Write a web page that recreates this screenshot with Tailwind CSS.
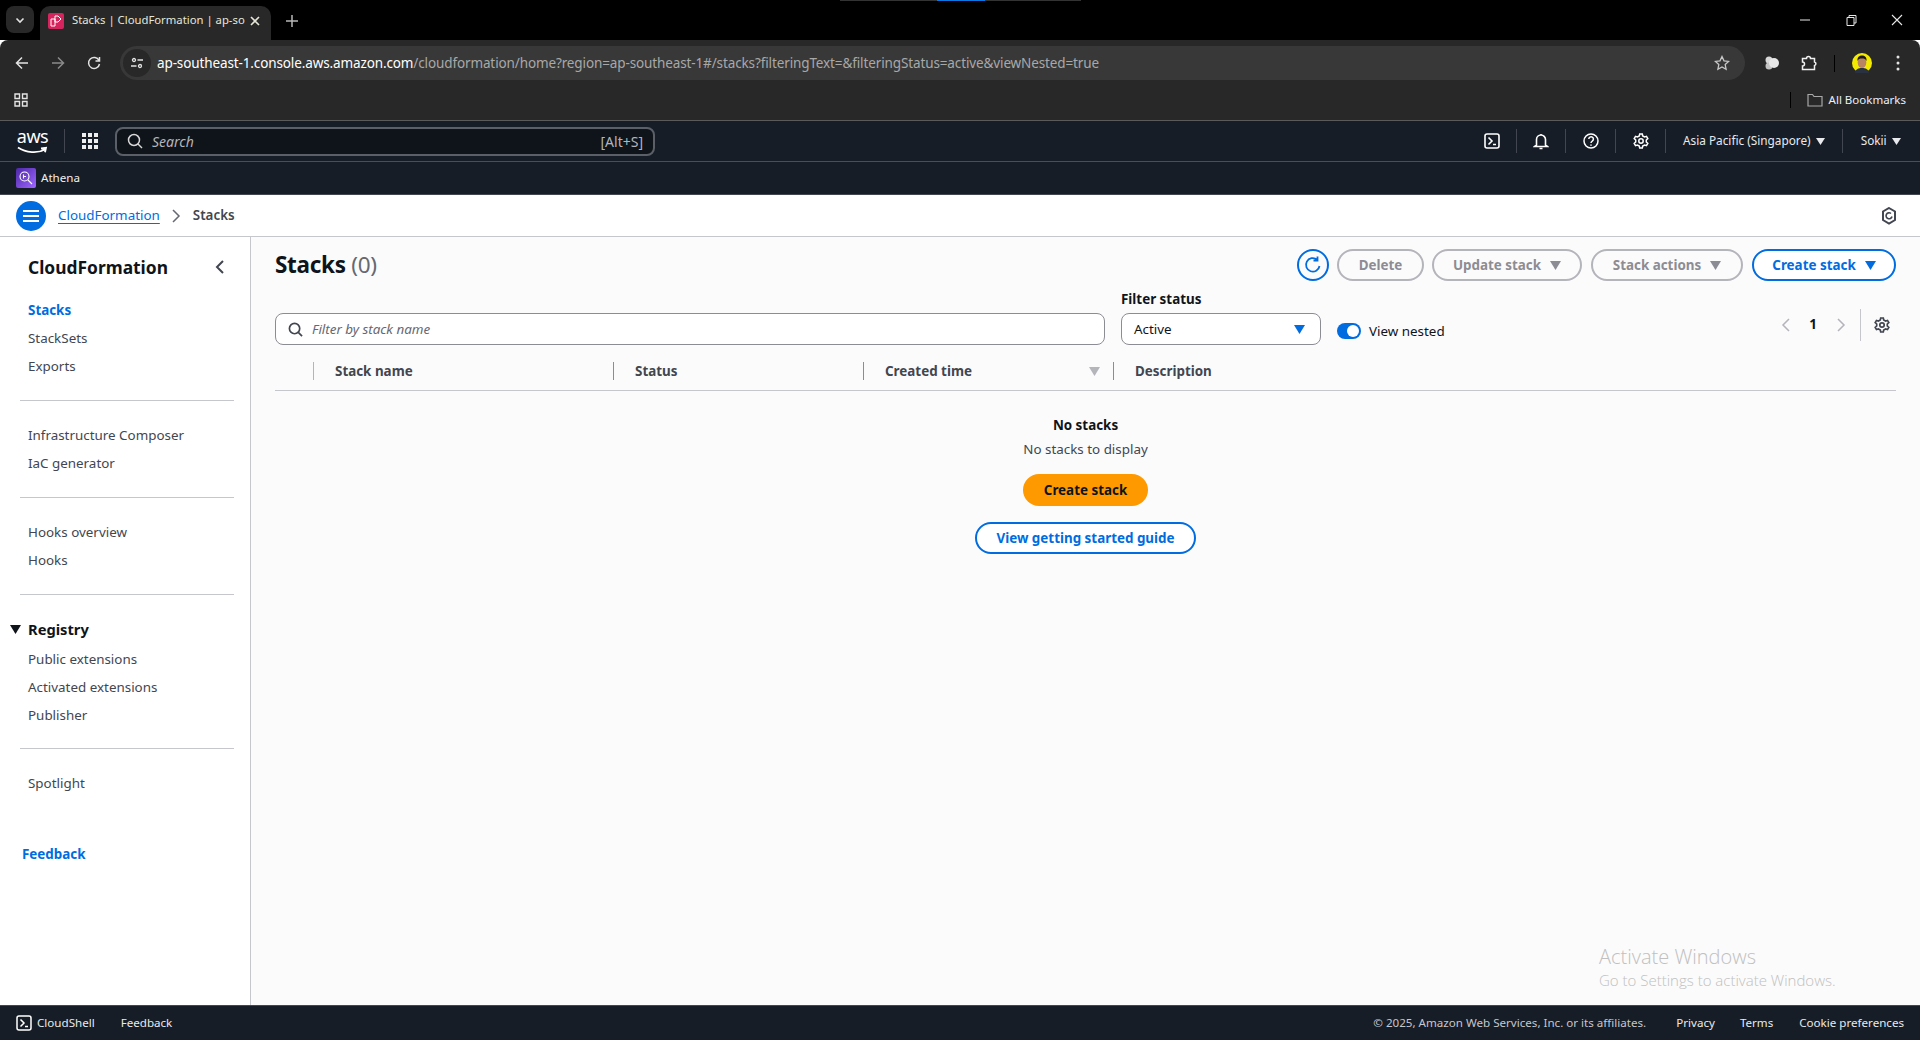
<!DOCTYPE html>
<html lang="en">
  <head>
    <meta charset="UTF-8" />
    <title>Stacks | CloudFormation</title>
    <script src="https://cdn.jsdelivr.net/npm/@tailwindcss/browser@4"></script>
  </head>
  <body class="relative w-[1920px] h-[1040px] overflow-hidden flex flex-col bg-white font-['Noto_Sans',sans-serif] text-[13.4px] text-[#424650]">

    <!-- Browser tab strip -->
    <div class="relative h-10 shrink-0 bg-black flex items-end pl-[6px]">
      <div class="absolute top-0 left-[840px] w-[241px] h-px bg-[#333] flex justify-center"><div class="w-12 h-px bg-[#0a78e0]"></div></div>
      <div class="mb-[7px] w-7 h-[27px] rounded-lg bg-[#282828] flex items-center justify-center">
        <svg width="12" height="12" viewBox="0 0 12 12" fill="none" stroke="#e3e3e3" stroke-width="1.6"><path d="M2.5 4.5 6 8l3.5-3.5"/></svg>
      </div>
      <div class="ml-[6px] w-[231px] h-[34px] pb-[5px] rounded-t-[10px] bg-[#282828] flex items-center pl-2 text-[11.3px] text-[#e6e6d8]">
        <div class="w-4 h-4 rounded-[2px] bg-[#d6245f] flex items-center justify-center">
          <svg width="12" height="12" viewBox="0 0 12 12" fill="none" stroke="#fff" stroke-width="1"><path d="M1 4h4v7H1zM5 1h3l3 3-3 3H5z"/></svg>
        </div>
        <span class="ml-2 w-[170px] whitespace-nowrap">Stacks | CloudFormation | ap-so</span>
        <svg class="ml-[7px]" width="12" height="12" viewBox="0 0 12 12" stroke="#e6e6d8" stroke-width="1.6"><path d="M2 2l8 8M10 2l-8 8"/></svg>
      </div>
      <svg class="ml-[15px] mb-[13px]" width="12" height="12" viewBox="0 0 12 12" stroke="#b8b8b8" stroke-width="1.5"><path d="M6 0v12M0 6h12"/></svg>
      <div class="ml-auto flex items-center h-10">
        <svg width="46" height="12" viewBox="0 0 46 12" stroke="#e8e8e8"><path d="M18 6h10"/></svg>
        <svg width="46" height="12" viewBox="0 0 46 12" fill="none" stroke="#e8e8e8"><path d="M19 3.5h7v8h-7zM21 3.500V1.500h7v7.500h-2"/></svg>
        <svg width="46" height="12" viewBox="0 0 46 12" stroke="#e8e8e8" stroke-width="1.1"><path d="M18 1l10 10M28 1l-10 10"/></svg>
      </div>
    </div>

    <!-- Browser toolbar -->
    <div class="h-10 shrink-0 bg-[#282828] rounded-t-lg flex items-center pt-[6px]">
      <svg class="ml-[15px]" width="14" height="14" viewBox="0 0 14 14" fill="none" stroke="#e3e3e3" stroke-width="1.5"><path d="M13 7H1.500M7 1.500 1.500 7 7 12.500"/></svg>
      <svg class="ml-[22px]" width="14" height="14" viewBox="0 0 14 14" fill="none" stroke="#8a8a8a" stroke-width="1.5"><path d="M1 7h11.500M7 1.500 12.500 7 7 12.500"/></svg>
      <svg class="ml-[22px]" width="14" height="14" viewBox="0 0 14 14" fill="none" stroke="#e3e3e3" stroke-width="1.500"><path d="M12 4.500A5.500 5.500 0 1 0 12.500 8M12.500 1v4h-4"/></svg>
      <div class="ml-[19px] w-[1625px] h-[34px] rounded-full bg-[#383838] flex items-center pl-[3px] text-[13.5px] text-[#a8a8a8]">
        <div class="w-7 h-7 rounded-full bg-[#282828] flex items-center justify-center">
          <svg width="14" height="14" viewBox="0 0 14 14" fill="none" stroke="#e3e3e3" stroke-width="1.300"><circle cx="4" cy="4" r="1.500"/><path d="M7.500 4H13M1 10h5.500"/><circle cx="10" cy="10" r="1.500"/></svg>
        </div>
        <span class="ml-[6px] whitespace-nowrap tracking-[-0.12px]"><span class="text-white">ap-southeast-1.console.aws.amazon.com</span>/cloudformation/home?region=ap-southeast-1#/stacks?filteringText=&amp;filteringStatus=active&amp;viewNested=true</span>
        <svg class="ml-auto mr-[15px]" width="16" height="16" viewBox="0 0 16 16" fill="none" stroke="#c8c8c8" stroke-width="1.300"><path d="M8 1.500l2 4.300 4.600.6-3.400 3.200.9 4.700L8 12l-4.100 2.300.9-4.700L1.400 6.400 6 5.800z"/></svg>
      </div>
      <svg class="ml-[19px]" width="16" height="16" viewBox="0 0 16 16" fill="#d8d8d8"><circle cx="5" cy="5" r="3.500"/><circle cx="5" cy="11" r="3.500" fill="#c4c4c4"/><circle cx="10" cy="8" r="5" fill="#e8e8e8"/></svg>
      <svg class="ml-[21px]" width="17" height="17" viewBox="0 0 17 17" fill="none" stroke="#f0f0f0" stroke-width="1.500"><path d="M1.500 3.500h4a2 2 0 0 1 4 0h4v3.500a1.800 1.800 0 0 1 0 3.500v4h-12v-3.500a2 2 0 0 0 0-4z"/></svg>
      <div class="ml-[16px] w-px h-[17px] bg-black"></div>
      <svg class="ml-[17px]" width="20" height="20" viewBox="0 0 20 20">
        <circle cx="10" cy="10" r="10" fill="#f4ea00"/>
        <path d="M3 20c.5-4 3.500-5 7-5s6.500 1 7 5z" fill="#2a3140"/>
        <ellipse cx="10" cy="9.500" rx="4.300" ry="5.500" fill="#b98461"/>
        <path d="M5.500 8c-.5-4 2-5.500 4.500-5.500S15 4 14.500 8c-1-2-2-2.500-4.500-2.500S6.500 6 5.500 8z" fill="#1f1a18"/>
      </svg>
      <svg class="ml-[24px]" width="4" height="16" viewBox="0 0 4 16" fill="#e3e3e3"><circle cx="2" cy="2" r="1.500"/><circle cx="2" cy="8" r="1.500"/><circle cx="2" cy="14" r="1.500"/></svg>
    </div>

    <!-- Bookmarks bar -->
    <div class="h-[41px] shrink-0 bg-[#282828] flex items-center border-b border-[#5a5a5a] text-[11.5px] text-[#e8f0ff]">
      <svg class="ml-[14px]" width="14" height="14" viewBox="0 0 14 14" fill="none" stroke="#e3e3e3" stroke-width="1.400"><path d="M1 1h4.500v4.500H1zM8.500 1H13v4.500H8.500zM1 8.500h4.500V13H1zM8.500 8.500H13V13H8.500z"/></svg>
      <div class="ml-auto w-px h-4 bg-black mr-[16px]"></div>
      <svg width="16" height="14" viewBox="0 0 16 14" fill="none" stroke="#a8a8a8" stroke-width="1.200"><path d="M1 2.500V13h14V3.500H7L5.500 1.500H1z"/></svg>
      <span class="ml-[6px] mr-[14px]">All Bookmarks</span>
    </div>

    <!-- AWS console nav -->
    <div class="h-[41px] shrink-0 bg-[#161d26] flex items-center border-b border-[#4a4f56] text-[11.8px] text-[#e8eaed]">
      <div class="ml-[17px] w-[31px] relative h-7 flex flex-col items-center">
        <span class="text-[18px] leading-[18px] text-white tracking-[-0.5px]">aws</span>
        <svg class="absolute bottom-0 left-0" width="32" height="9" viewBox="0 0 32 9" fill="none" stroke="#fff" stroke-width="1.800"><path d="M1 1.500C9 7 21 7.500 28 3.500M24 2.500l5-.7-1 4.500"/></svg>
      </div>
      <div class="ml-[16px] w-px h-6 bg-[#424650]"></div>
      <svg class="ml-[17px]" width="16" height="16" viewBox="0 0 16 16" fill="#eeeeee"><path d="M0 0h4v4H0zM6 0h4v4H6zM12 0h4v4h-4zM0 6h4v4H0zM6 6h4v4H6zM12 6h4v4h-4zM0 12h4v4H0zM6 12h4v4H6zM12 12h4v4h-4z"/></svg>
      <div class="ml-[17px] w-[540px] h-[29px] rounded-lg border-2 border-[#5b6068] bg-[#0f141a] flex items-center px-[10px] text-[14px] text-[#b4b4bb]">
        <svg width="16" height="16" viewBox="0 0 16 16" fill="none" stroke="#d8d8d8" stroke-width="1.500"><circle cx="7" cy="7" r="5.500"/><path d="M11 11l4 4"/></svg>
        <span class="ml-[9px] italic">Search</span>
        <span class="ml-auto">[Alt+S]</span>
      </div>
      <svg class="ml-[829px]" width="16" height="16" viewBox="0 0 16 16" fill="none" stroke="#fff" stroke-width="1.600"><rect x="1" y="1" width="14" height="14" rx="2"/><path d="M4.500 4.500 8 8l-3.500 3.500M9 11.500h3"/></svg>
      <div class="ml-[16px] w-px h-6 bg-[#424650]"></div>
      <svg class="ml-[16px]" width="16" height="17" viewBox="0 0 16 17" fill="none" stroke="#fff" stroke-width="1.600"><path d="M3.500 12V6.500a4.500 4.500 0 0 1 9 0V12l2 1.500H1.500zM6.500 15.500h3M8 1v1"/></svg>
      <div class="ml-[16px] w-px h-6 bg-[#424650]"></div>
      <svg class="ml-[17px]" width="16" height="16" viewBox="0 0 16 16" fill="none" stroke="#fff" stroke-width="1.500"><circle cx="8" cy="8" r="7"/><path d="M5.800 6a2.300 2.300 0 1 1 3.500 2C8.400 8.600 8 9 8 10M8 11.500v1.300"/></svg>
      <div class="ml-[16px] w-px h-6 bg-[#424650]"></div>
      <svg class="ml-[17px]" width="16" height="16" viewBox="0 0 16 16" fill="none" stroke="#fff" stroke-width="1.500"><circle cx="8" cy="8" r="2.200"/><path d="M6.700 1h2.600l.4 2 1.900 1 1.900-.6 1.300 2.200-1.500 1.400v2l1.500 1.400-1.300 2.200-1.900-.6-1.900 1-.4 2H6.700l-.4-2-1.900-1-1.900.6L1.200 10.400l1.500-1.400V7L1.200 5.600l1.300-2.200 1.900.6 1.900-1z"/></svg>
      <div class="ml-[16px] w-px h-6 bg-[#424650]"></div>
      <span class="ml-[17px] whitespace-nowrap">Asia Pacific (Singapore)</span>
      <svg class="ml-[5px]" width="9" height="7" viewBox="0 0 9 7" fill="#e8eaed"><path d="M0 0h9L4.500 7z"/></svg>
      <div class="ml-[17px] w-px h-6 bg-[#424650]"></div>
      <span class="ml-[18px]">Sokii</span>
      <svg class="ml-[5px]" width="9" height="7" viewBox="0 0 9 7" fill="#e8eaed"><path d="M0 0h9L4.500 7z"/></svg>
    </div>

    <!-- Service shortcuts -->
    <div class="h-[33px] shrink-0 bg-[#161d26] flex items-center border-b border-[#424650] text-[11.6px] text-[#f0f0f0]">
      <div class="ml-4 w-5 h-5 rounded-[2px] bg-gradient-to-br from-[#4d27a8] to-[#a166ff] flex items-center justify-center">
        <svg width="14" height="14" viewBox="0 0 14 14" fill="none" stroke="#fff" stroke-width="1.100"><circle cx="5.500" cy="5.500" r="4.500"/><path d="M9 9l4 4M4.500 3.500v4M4 5.500h3"/></svg>
      </div>
      <span class="ml-[5px]">Athena</span>
    </div>

    <!-- Breadcrumb header -->
    <div class="h-[42px] shrink-0 bg-white flex items-center border-b border-[#c6c6cd]">
      <div class="ml-4 w-[30px] h-[30px] rounded-full bg-[#006ce0] flex items-center justify-center">
        <svg width="16" height="14" viewBox="0 0 16 14" stroke="#fff" stroke-width="2"><path d="M0 2h16M0 7h16M0 12h16"/></svg>
      </div>
      <a class="ml-3 text-[#006ce0] underline underline-offset-[3px]">CloudFormation</a>
      <svg class="ml-[12px]" width="9" height="14" viewBox="0 0 9 14" fill="none" stroke="#656871" stroke-width="1.500"><path d="M1 1l6 6-6 6"/></svg>
      <span class="ml-[12px] font-semibold text-[#424650]">Stacks</span>
      <svg class="ml-auto mr-[23px]" width="16" height="18" viewBox="0 0 16 18" fill="none" stroke="#424650" stroke-width="2"><path d="M8 1l6 3.500v8.500l-6 3.500L2 13V4.500z"/><path d="M11 9.500a3 3 0 1 1-1-3" stroke-width="1.600"/></svg>
    </div>

    <!-- Main -->
    <div class="flex-1 min-h-0 flex">
      <!-- Side navigation -->
      <nav class="w-[251px] shrink-0 bg-white border-r border-[#c6c6cd] flex flex-col">
        <div class="ml-[28px] mr-[26px] mt-[16px] h-7 flex items-center justify-between">
          <span class="text-[17.4px] font-bold text-[#0f141a]">CloudFormation</span>
          <svg width="9" height="14" viewBox="0 0 9 14" fill="none" stroke="#424650" stroke-width="2"><path d="M8 1 2 7l6 6"/></svg>
        </div>
        <ul class="mt-[17px] ml-[28px] flex flex-col gap-[4px] [&>li]:h-6 [&>li]:leading-6">
          <li class="font-bold text-[#006ce0]">Stacks</li>
          <li>StackSets</li>
          <li>Exports</li>
        </ul>
        <div class="ml-5 mr-4 mt-[22px] border-t border-[#c6c6cd]"></div>
        <ul class="mt-[22px] ml-[28px] flex flex-col gap-[4px] [&>li]:h-6 [&>li]:leading-6">
          <li>Infrastructure Composer</li>
          <li>IaC generator</li>
        </ul>
        <div class="ml-5 mr-4 mt-[22px] border-t border-[#c6c6cd]"></div>
        <ul class="mt-[22px] ml-[28px] flex flex-col gap-[4px] [&>li]:h-6 [&>li]:leading-6">
          <li>Hooks overview</li>
          <li>Hooks</li>
        </ul>
        <div class="ml-5 mr-4 mt-[22px] border-t border-[#c6c6cd]"></div>
        <div class="mt-[22px] h-6 flex items-center pl-[10px]">
          <svg width="11" height="9" viewBox="0 0 11 9" fill="#0f141a"><path d="M0 0h11L5.500 9z"/></svg>
          <span class="ml-[7px] text-[14.7px] font-bold text-[#0f141a]">Registry</span>
        </div>
        <ul class="mt-[6px] ml-[28px] flex flex-col gap-[4px] [&>li]:h-6 [&>li]:leading-6">
          <li>Public extensions</li>
          <li>Activated extensions</li>
          <li>Publisher</li>
        </ul>
        <div class="ml-5 mr-4 mt-[21px] border-t border-[#c6c6cd]"></div>
        <div class="mt-[22px] ml-[28px] h-6 leading-6">Spotlight</div>
        <div class="mt-[47px] ml-[22px] h-6 leading-6 font-bold text-[#006ce0]">Feedback</div>
      </nav>

      <!-- Content -->
      <main class="flex-1 min-w-0 bg-[#fbfbfb] pl-[24px] pr-[24px] flex flex-col">
        <div class="mt-[12px] h-8 flex items-center">
          <h1 class="text-[22.500px] font-bold text-[#0f141a] tracking-[-0.3px]">Stacks <span class="font-normal text-[#656871]">(0)</span></h1>
          <div class="ml-auto w-8 h-8 rounded-full border-2 border-[#006ce0] flex items-center justify-center">
            <svg width="18" height="18" viewBox="0 0 18 18" fill="none" stroke="#006ce0" stroke-width="1.800"><path d="M15.500 10A6.800 6.800 0 1 1 13 3.500M13.500 .5v4h-4"/></svg>
          </div>
          <div class="ml-2 w-[87px] h-8 rounded-full border-2 border-[#b4b4bb] flex items-center justify-center font-bold text-[#8c8c94]">Delete</div>
          <div class="ml-2 w-[150px] h-8 rounded-full border-2 border-[#b4b4bb] flex items-center justify-center gap-[9px] font-bold text-[#8c8c94]">Update stack
            <svg width="11" height="9" viewBox="0 0 11 9" fill="#8c8c94"><path d="M0 0h11L5.500 9z"/></svg>
          </div>
          <div class="ml-[9px] w-[152px] h-8 rounded-full border-2 border-[#b4b4bb] flex items-center justify-center gap-[9px] font-bold text-[#8c8c94]">Stack actions
            <svg width="11" height="9" viewBox="0 0 11 9" fill="#8c8c94"><path d="M0 0h11L5.500 9z"/></svg>
          </div>
          <div class="ml-[9px] w-[144px] h-8 rounded-full border-2 border-[#006ce0] bg-white flex items-center justify-center gap-[9px] font-bold text-[#006ce0]">Create stack
            <svg width="11" height="9" viewBox="0 0 11 9" fill="#006ce0"><path d="M0 0h11L5.500 9z"/></svg>
          </div>
        </div>

        <!-- Filters -->
        <div class="mt-[18px] flex items-end h-[46px]">
          <div class="w-[830px] h-8 rounded-lg border border-[#8c8c94] bg-white flex items-center pl-3">
            <svg width="15" height="15" viewBox="0 0 16 16" fill="none" stroke="#424650" stroke-width="1.800"><circle cx="7" cy="7" r="5.500"/><path d="M11 11l4 4"/></svg>
            <span class="ml-[9px] italic text-[#656871]">Filter by stack name</span>
          </div>
          <div class="ml-4 w-[200px] flex flex-col">
            <span class="h-[22px] leading-[17px] font-bold text-[#0f141a]">Filter status</span>
            <div class="h-8 rounded-lg border border-[#8c8c94] bg-white flex items-center justify-between pl-3 pr-[15px] text-[#0f141a]">Active
              <svg width="11" height="9" viewBox="0 0 11 9" fill="#006ce0"><path d="M0 0h11L5.500 9z"/></svg>
            </div>
          </div>
          <div class="ml-4 h-[32px] flex items-center pt-[4px]">
            <div class="w-6 h-4 rounded-full bg-[#006ce0] flex items-center justify-end pr-[2px]"><div class="w-3 h-3 rounded-full bg-white"></div></div>
            <span class="ml-2 text-[#0f141a]">View nested</span>
          </div>
          <div class="ml-auto mr-[6px] self-start mt-[10px] flex items-start">
            <svg class="mt-[9px]" width="10" height="14" viewBox="0 0 10 14" fill="none" stroke="#b4b4bb" stroke-width="1.500"><path d="M8 1 2 7l6 6"/></svg>
            <span class="mt-[5px] ml-[18px] font-bold text-[#0f141a]">1</span>
            <svg class="mt-[9px] ml-[19px]" width="10" height="14" viewBox="0 0 10 14" fill="none" stroke="#b4b4bb" stroke-width="1.500"><path d="M2 1l6 6-6 6"/></svg>
            <div class="ml-[14px] w-px h-[32px] bg-[#c6c6cd]"></div>
            <svg class="ml-[13px] mt-[8px]" width="16" height="16" viewBox="0 0 16 16" fill="none" stroke="#424650" stroke-width="1.700"><circle cx="8" cy="8" r="2.200"/><path d="M6.700 1h2.600l.4 2 1.900 1 1.900-.6 1.300 2.200-1.500 1.400v2l1.500 1.400-1.300 2.200-1.900-.6-1.900 1-.4 2H6.700l-.4-2-1.900-1-1.900.6L1.200 10.400l1.500-1.400V7L1.200 5.600l1.300-2.200 1.900.6 1.900-1z"/></svg>
          </div>
        </div>

        <!-- Table header -->
        <div class="mt-[17px] h-[29px] flex items-start border-b border-[#c6c6cd] font-bold text-[#424650]">
          <div class="w-[38px]"></div>
          <div class="w-[300px] h-[18px] flex items-center"><span class="w-px h-[18px] bg-[#b4b4bb]"></span><span class="ml-[21px]">Stack name</span></div>
          <div class="w-[250px] h-[18px] flex items-center"><span class="w-px h-[18px] bg-[#8c8c94]"></span><span class="ml-[21px]">Status</span></div>
          <div class="w-[250px] h-[18px] flex items-center"><span class="w-px h-[18px] bg-[#8c8c94]"></span><span class="ml-[21px]">Created time</span>
            <svg class="ml-auto mr-[13px]" width="11" height="9" viewBox="0 0 11 9" fill="#b4b4bb"><path d="M0 0h11L5.500 9z"/></svg></div>
          <div class="flex-1 h-[18px] flex items-center"><span class="w-px h-[18px] bg-[#8c8c94]"></span><span class="ml-[21px]">Description</span></div>
        </div>

        <!-- Empty state -->
        <div class="flex flex-col items-center w-[1621px]">
          <span class="mt-[24px] h-5 leading-5 font-bold text-[#0f141a]">No stacks</span>
          <span class="mt-1 h-5 leading-5">No stacks to display</span>
          <div class="mt-[15px] w-[125px] h-8 rounded-full bg-[#ff9900] flex items-center justify-center font-bold text-[#0f141a]">Create stack</div>
          <div class="mt-4 w-[221px] h-8 rounded-full border-2 border-[#006ce0] bg-white flex items-center justify-center font-bold text-[#006ce0]">View getting started guide</div>
        </div>
      </main>
    </div>

    <!-- Footer -->
    <footer class="h-[35px] shrink-0 bg-[#161d26] flex items-center border-t border-[#424650] text-[11.6px] text-[#e8eaed]">
      <svg class="ml-4" width="16" height="16" viewBox="0 0 16 16" fill="none" stroke="#fff" stroke-width="1.500"><rect x="1" y="1" width="14" height="14" rx="2"/><path d="M4.500 4.500 8 8l-3.500 3.500M9 11.500h3"/></svg>
      <span class="ml-[5px]">CloudShell</span>
      <span class="ml-[26px]">Feedback</span>
      <span class="ml-auto text-[#c6c6cd]">© 2025, Amazon Web Services, Inc. or its affiliates.</span>
      <span class="ml-[30px]">Privacy</span>
      <span class="ml-[25px]">Terms</span>
      <span class="ml-[26px] mr-4">Cookie preferences</span>
    </footer>

    <!-- Windows watermark, sits over the page -->
    <div class="absolute left-[1599px] top-[943px] text-[#c0c0c0] font-['Open_Sans',sans-serif] font-light">
      <div class="text-[20px] leading-7">Activate Windows</div>
      <div class="text-[15px] leading-[19px]">Go to Settings to activate Windows.</div>
    </div>
  </body>
</html>
